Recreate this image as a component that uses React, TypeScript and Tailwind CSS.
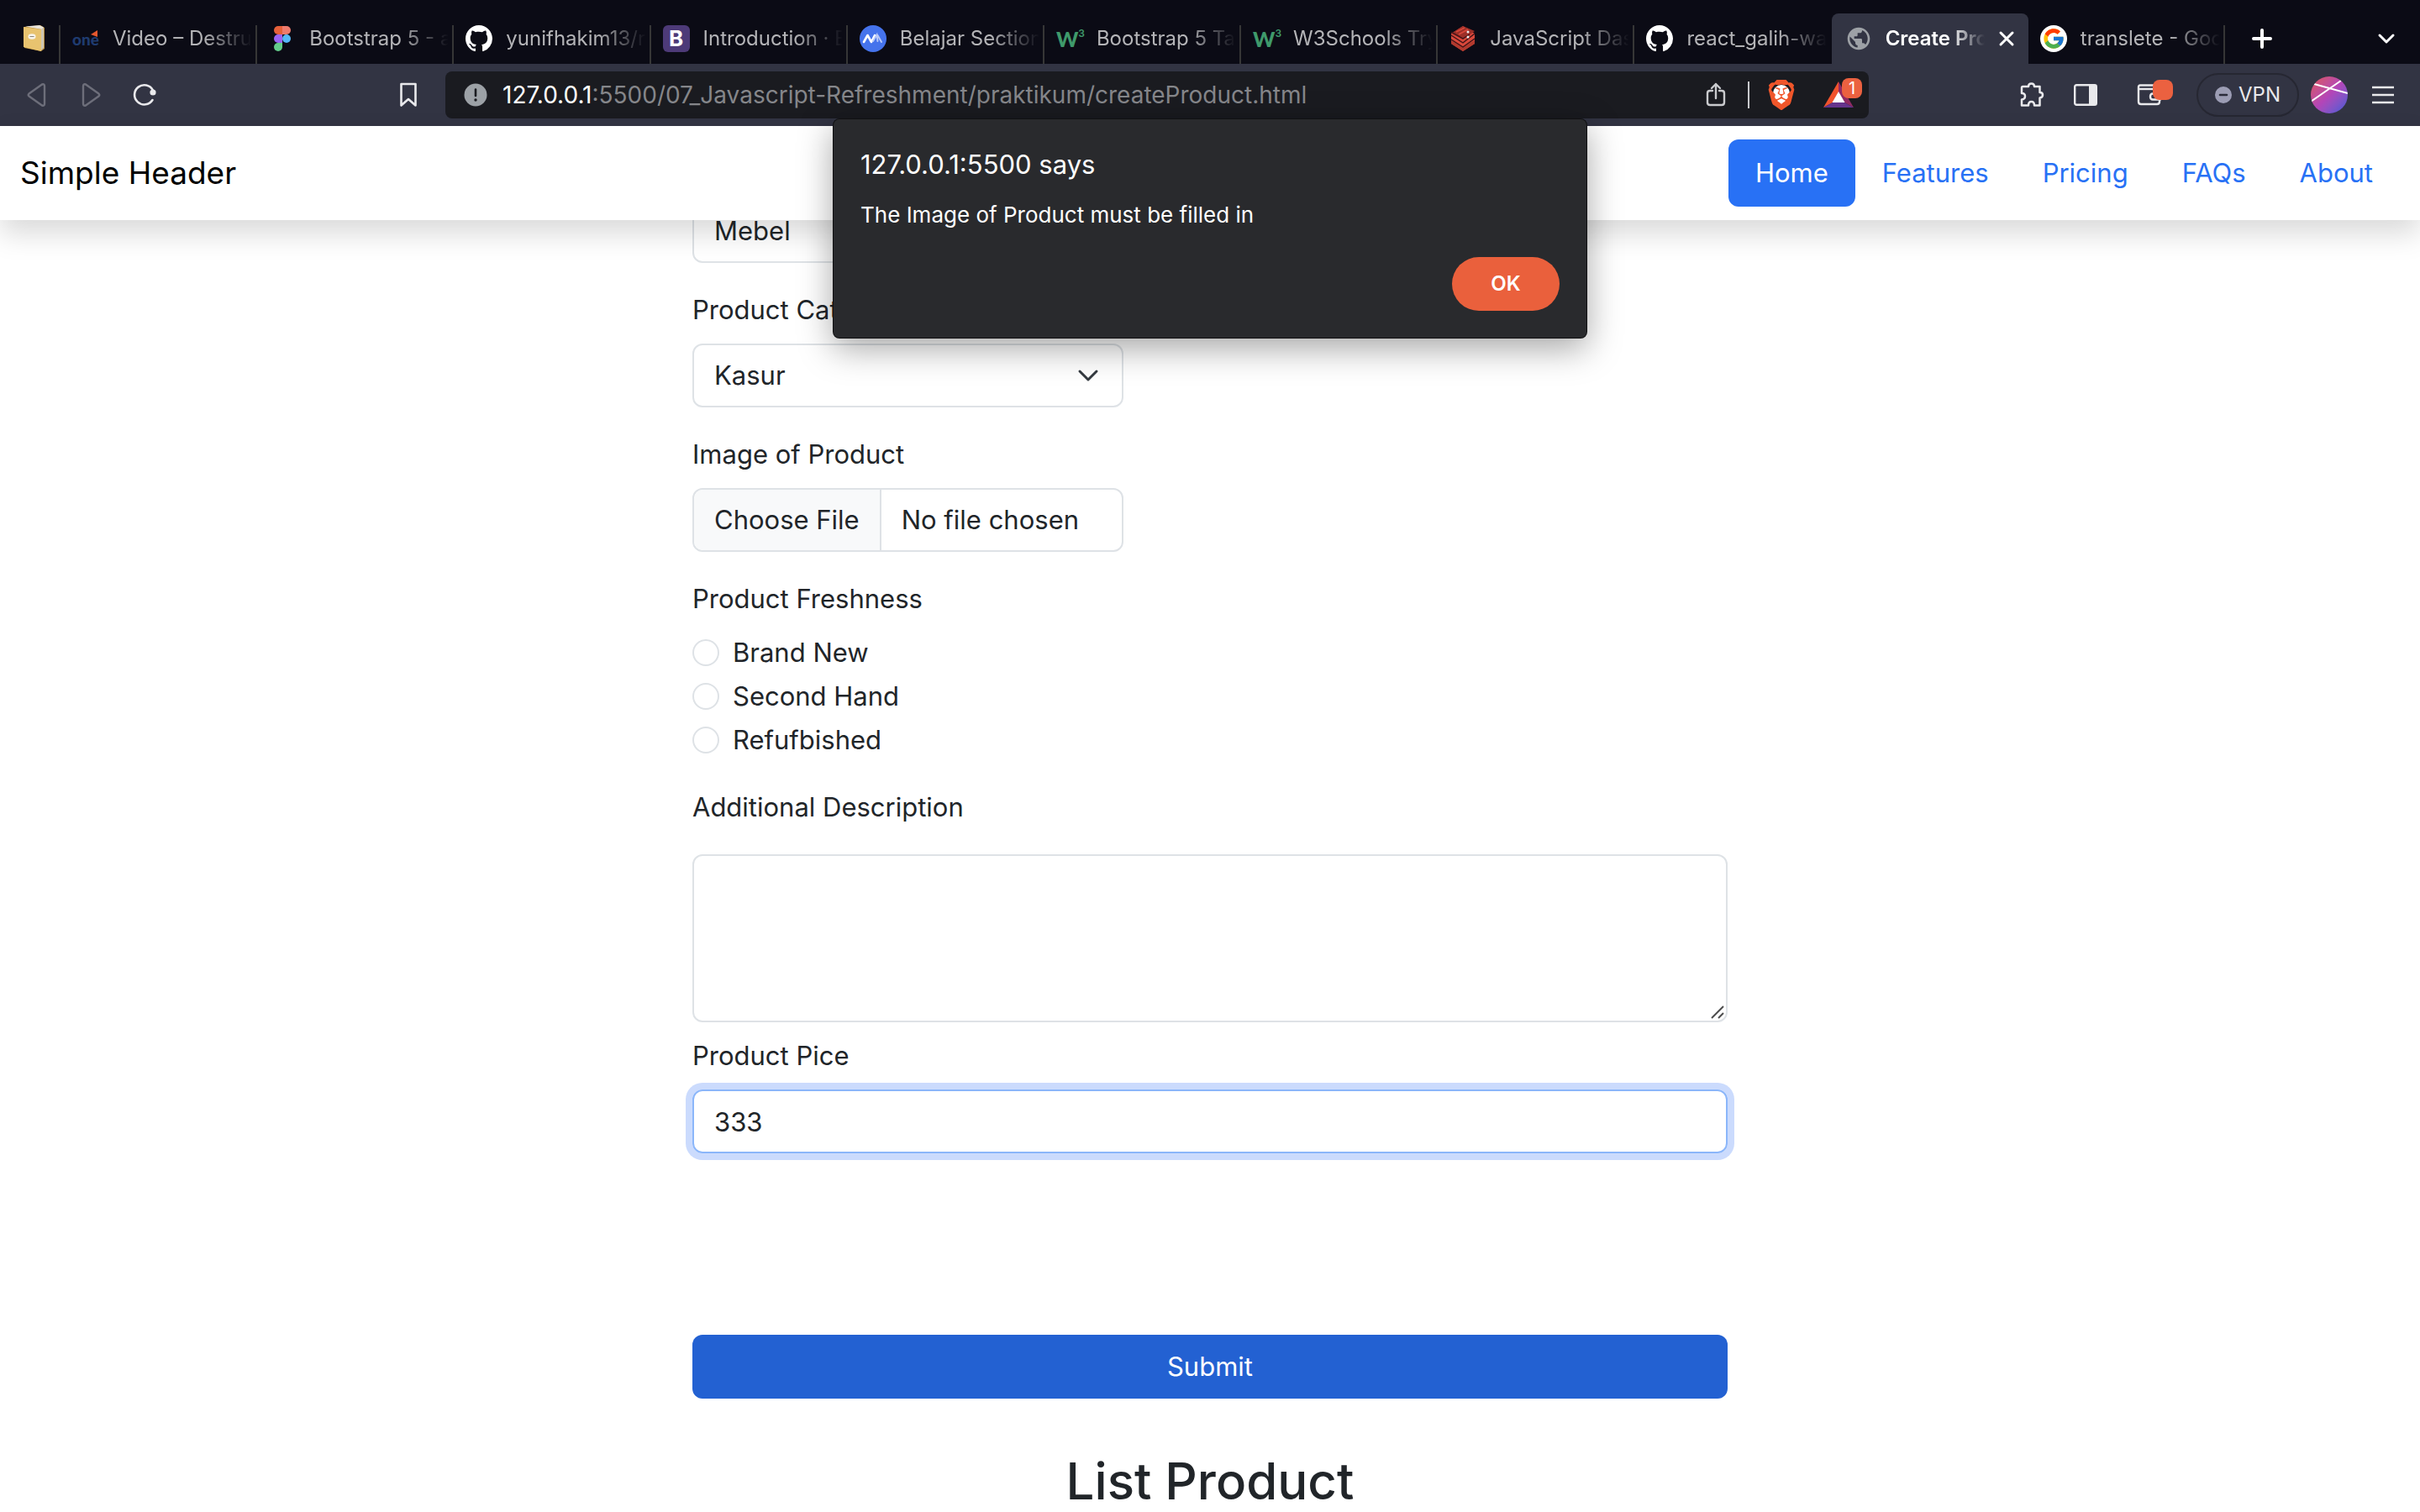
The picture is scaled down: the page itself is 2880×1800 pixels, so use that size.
import type { ReactNode } from 'react';
import { FcGoogle } from 'react-icons/fc';
import { VscGithubInverted } from 'react-icons/vsc';
import { MdPublic } from 'react-icons/md';
import { SiBrave } from 'react-icons/si';

function BookIcon() {
  return (
    <svg className="h-8 w-7" viewBox="0 0 28 32" aria-hidden="true">
      <path d="M3 2 L22 0 L27 3 L27 28 L23 31 L3 27 Z" fill="#b98f3e" />
      <path d="M4 1.500 L21 0 L26 2.500 L24 5 Z" fill="#e9e4da" />
      <path d="M26 3 L26 27 L23 30 L23 5 Z" fill="#cfc6b4" />
      <path d="M2 2 L23 5 L23 31 L2 26 Z" fill="#e8c36f" />
      <ellipse cx="12" cy="13.500" rx="4.500" ry="3.200" fill="#f7f4ec" />
      <path d="M9.500 13.500 H14.500" stroke="#8c8577" strokeWidth="1" />
    </svg>
  );
}

function OneIcon() {
  return (
    <span className="relative flex h-8 w-8 items-center justify-center font-['Lato'] text-[19px] leading-none font-black text-[#1f3b70]">
      one
      <svg className="absolute top-1.5 right-0.5 size-2" viewBox="0 0 8 8" aria-hidden="true">
        <path d="M8 0 V8 L0 5 Z" fill="#e4572e" />
      </svg>
    </span>
  );
}

function FigmaIcon() {
  return (
    <svg className="h-8 w-8" viewBox="0 0 32 32" aria-hidden="true">
      <path d="M16 1 H11 a5 5 0 0 0 0 10 H16 Z" fill="#e5603a" />
      <path d="M16 1 H21 a5 5 0 0 1 0 10 H16 Z" fill="#ee7b6d" />
      <path d="M16 11 H11 a5 5 0 0 0 0 10 H16 Z" fill="#9a63f3" />
      <circle cx="21" cy="16" r="5" fill="#55b8f8" />
      <path d="M16 21 H11 a5 5 0 1 0 5 5 Z" fill="#63cc8a" />
    </svg>
  );
}

function BootstrapIcon() {
  return (
    <span className="flex size-8 items-center justify-center rounded-md bg-[#4d3a78] font-['Inter'] text-[26px] leading-none font-bold text-white">
      B
    </span>
  );
}

function BelajarIcon() {
  return (
    <svg className="size-8" viewBox="0 0 32 32" aria-hidden="true">
      <circle cx="16" cy="16" r="16" fill="#4573ec" />
      <path d="M5 20 L9.500 12 L14 20 L18 12" fill="none" stroke="#fff" strokeWidth="2.600" strokeLinecap="round" strokeLinejoin="round" />
      <path d="M16 19 L20.500 11.500 L21.500 19 M21.500 12 L26 20" fill="none" stroke="#b9c9f8" strokeWidth="2" strokeLinecap="round" />
    </svg>
  );
}

function W3Icon() {
  return (
    <span className="flex h-8 w-8 items-center leading-none font-black text-[#3f9a6b]">
      <span className="font-['Lato'] text-[25px]">W</span>
      <span className="self-start pt-1 font-['Inter'] text-[12px] font-semibold">3</span>
    </span>
  );
}

function DashIcon() {
  return (
    <svg className="size-8" viewBox="0 0 32 32" aria-hidden="true">
      <path d="M2 10 L16 1 L30 10 V22 L16 31 L2 22 Z" fill="#d9483b" />
      <path d="M2 18 L16 26 L30 18 V22 L16 31 L2 22 Z" fill="#b23a2e" />
      <path d="M2 10 L16 1 L30 7 L16 17 Z" fill="#9c2f28" />
      <path d="M2 12 L16 21 L30 10 M2 17 L16 26 L30 16 M2 8 L16 16 L24 11" fill="none" stroke="#3a1216" strokeWidth="1.400" />
      <path d="M8 8 L18 3 M11 11 L22 5" stroke="#d9483b" strokeWidth="1.600" />
      <circle cx="22" cy="8" r="1.500" fill="#eee" />
      <circle cx="22" cy="14" r="1.500" fill="#eee" />
    </svg>
  );
}

function GithubIcon() {
  return <VscGithubInverted className="size-8 text-white" />;
}

function GoogleIcon() {
  return (
    <span className="flex size-8 items-center justify-center rounded-full bg-white">
      <FcGoogle className="size-7" />
    </span>
  );
}

type Tab = { title: string; icon: ReactNode; active?: boolean; noLine?: boolean };

const tabs: Tab[] = [
  { title: 'Video – Destru', icon: <OneIcon /> },
  { title: 'Bootstrap 5 - a', icon: <FigmaIcon /> },
  { title: 'yunifhakim13/r', icon: <GithubIcon /> },
  { title: 'Introduction · B', icon: <BootstrapIcon /> },
  { title: 'Belajar Section', icon: <BelajarIcon /> },
  { title: 'Bootstrap 5 Ta', icon: <W3Icon /> },
  { title: 'W3Schools Try', icon: <W3Icon /> },
  { title: 'JavaScript Das', icon: <DashIcon /> },
  { title: 'react_galih-wa', icon: <GithubIcon />, noLine: true },
  { title: 'Create Pro', icon: <MdPublic className="size-8 text-[#9da1a6]" />, active: true },
  { title: 'translete - Goo', icon: <GoogleIcon /> },
];

function TabItem({ title, icon, active, noLine }: Tab) {
  if (active) {
    return (
      <div className="mt-4 flex min-w-0 items-center gap-4 rounded-t-lg bg-[#323443] px-4">
        <span className="shrink-0">{icon}</span>
        <span className="min-w-0 flex-1 overflow-hidden mask-r-from-65% text-[24px] leading-8 font-semibold whitespace-nowrap text-white">
          {title}
        </span>
        <button type="button" aria-label="Close tab" className="shrink-0 text-white">
          <svg className="size-5" viewBox="0 0 20 20" fill="none" stroke="currentColor" strokeWidth="3" strokeLinecap="round" aria-hidden="true">
            <path d="M3 3 L17 17 M17 3 L3 17" />
          </svg>
        </button>
      </div>
    );
  }
  return (
    <div className={`mt-[30px] flex min-w-0 items-start gap-4 border-r-2 pr-1 pl-3.5 ${noLine ? 'border-transparent' : 'border-[#363636]'}`}>
      <span className="shrink-0">{icon}</span>
      <span className="min-w-0 flex-1 overflow-hidden mask-r-from-65% text-[24px] leading-8 whitespace-nowrap text-[#b4b4b7]">
        {title}
      </span>
    </div>
  );
}

function TabStrip() {
  return (
    <div className="flex h-[76px] bg-[#0b0b15]">
      <div className="mt-[30px] flex w-[72px] shrink-0 items-start justify-end border-r-2 border-[#363636] pr-4">
        <BookIcon />
      </div>
      <div className="grid min-w-0 flex-1 grid-cols-11">
        {tabs.map((tab) => (
          <TabItem key={tab.title} {...tab} />
        ))}
      </div>
      <div className="flex w-[232px] shrink-0 items-center justify-between pt-4 pr-7 pl-7 text-white">
        <button type="button" aria-label="New tab">
          <svg className="size-8" viewBox="0 0 32 32" fill="none" stroke="currentColor" strokeWidth="4" strokeLinecap="round" aria-hidden="true">
            <path d="M16 6 V26 M6 16 H26" />
          </svg>
        </button>
        <button type="button" aria-label="Search tabs">
          <svg className="size-6" viewBox="0 0 24 24" fill="none" stroke="currentColor" strokeWidth="3" strokeLinecap="round" strokeLinejoin="round" aria-hidden="true">
            <path d="M4 8 L12 16 L20 8" />
          </svg>
        </button>
      </div>
    </div>
  );
}

function Toolbar() {
  return (
    <div className="flex h-[74px] items-center bg-[#323443] pr-[30px] text-[#e9e9ec]">
      <div className="flex w-[530px] shrink-0 items-center justify-between pr-7 pl-7">
        <div className="flex items-center gap-8">
          <button type="button" aria-label="Back" className="text-[#6d6e7a]">
            <svg className="size-8" viewBox="0 0 32 32" fill="none" stroke="currentColor" strokeWidth="2.400" strokeLinejoin="round" aria-hidden="true">
              <path d="M22 3.500 L6.500 14.500 Q5 16 6.500 17.500 L22 28.500 Q25 29.500 25 26.500 V5.500 Q25 2.500 22 3.500 Z" />
            </svg>
          </button>
          <button type="button" aria-label="Forward" className="text-[#6d6e7a]">
            <svg className="size-8" viewBox="0 0 32 32" fill="none" stroke="currentColor" strokeWidth="2.400" strokeLinejoin="round" aria-hidden="true">
              <path d="M10 3.500 L25.500 14.500 Q27 16 25.500 17.500 L10 28.500 Q7 29.500 7 26.500 V5.500 Q7 2.500 10 3.500 Z" />
            </svg>
          </button>
          <button type="button" aria-label="Reload">
            <svg className="size-8" viewBox="0 0 32 32" fill="none" stroke="currentColor" strokeWidth="2.600" strokeLinecap="round" aria-hidden="true">
              <path d="M25.500 22 A11.600 11.600 0 1 1 26 10.500" />
              <circle cx="26" cy="13" r="3.600" fill="currentColor" stroke="none" />
            </svg>
          </button>
        </div>
        <button type="button" aria-label="Bookmark this page">
          <svg className="size-8" viewBox="0 0 32 32" fill="none" stroke="currentColor" strokeWidth="2.600" strokeLinejoin="round" aria-hidden="true">
            <path d="M7.500 3 H24.500 V28.500 L16 21 L7.500 28.500 Z" />
          </svg>
        </button>
      </div>

      <div className="flex h-14 min-w-0 flex-1 items-center rounded-lg bg-[#1a1b20] pr-2 pl-[22px]">
        <svg className="mr-[18px] size-7 shrink-0" viewBox="0 0 28 28" aria-hidden="true">
          <circle cx="14" cy="14" r="13.500" fill="#9ca1a6" />
          <path d="M14 7.500 V15" stroke="#1a1b20" strokeWidth="2.600" strokeLinecap="round" />
          <circle cx="14" cy="20" r="1.700" fill="#1a1b20" />
        </svg>
        <div className="min-w-0 flex-1 truncate text-[28px] leading-9 text-[#85868a]">
          <span className="text-white">127.0.0.1</span>:5500/07_Javascript-Refreshment/praktikum/createProduct.html
        </div>
        <button type="button" aria-label="Share this page" className="text-[#c9cacd]">
          <svg className="size-8" viewBox="0 0 32 32" fill="none" stroke="currentColor" strokeWidth="2.400" strokeLinecap="round" strokeLinejoin="round" aria-hidden="true">
            <path d="M12 11 H9 Q6 11 6 14 V25 Q6 28 9 28 H23 Q26 28 26 25 V14 Q26 11 23 11 H20" />
            <path d="M16 20 V3 M11 8 L16 3 L21 8" />
          </svg>
        </button>
        <span className="mr-[22px] ml-[22px] h-8 w-0.5 bg-[#c9cacd]" />
        <button type="button" aria-label="Brave Shields" className="relative flex h-9 w-8 items-center justify-center text-[#f0562a]">
          <span className="absolute h-6 w-5 rounded-full bg-white" />
          <SiBrave className="relative size-9 shrink-0" />
        </button>
        <button type="button" aria-label="Brave Rewards" className="relative ml-[34px] flex h-9 w-[46px] items-center">
          <svg className="h-8 w-9" viewBox="0 0 36 32" aria-hidden="true">
            <path d="M18 0 L0 31 L11 25 L18 13 Z" fill="#f1532d" />
            <path d="M18 0 L36 31 L25 25 L18 13 Z" fill="#912a63" />
            <path d="M0 31 L11 25 H25 L36 31 Z" fill="#66348c" />
            <path d="M18 12 L25.500 25 H10.500 Z" fill="#fff" />
          </svg>
          <span className="absolute -top-0.5 right-0 flex size-6 items-center justify-center rounded-lg bg-[#eb6140] text-[20px] leading-6 text-white">1</span>
        </button>
      </div>

      <div className="flex w-[626px] shrink-0 items-center justify-end">
        <button type="button" aria-label="Extensions" className="mr-8">
          <svg className="size-8" viewBox="0 0 32 32" fill="none" stroke="currentColor" strokeWidth="2.500" strokeLinejoin="round" aria-hidden="true">
            <path d="M5.500 6 H12 Q12 2.500 15.500 2.500 T19 6 H25.500 V13 Q29 13 29 16 T25.500 19.500 V28.500 H19 Q19 24 15.500 24 T12 28.500 H4 V21.500 Q8 21 8 17.500 T4 14 V7.500 Q4 6 5.500 6 Z" />
          </svg>
        </button>
        <button type="button" aria-label="Show sidebar" className="mr-11">
          <svg className="size-8" viewBox="0 0 32 32" aria-hidden="true">
            <rect x="3.200" y="4.200" width="25.600" height="23.600" rx="2" fill="none" stroke="currentColor" strokeWidth="2.400" />
            <rect x="20" y="4" width="9" height="24" fill="currentColor" />
          </svg>
        </button>
        <button type="button" aria-label="Wallet" className="relative mr-7 flex h-8 w-11">
          <svg className="size-8" viewBox="0 0 32 32" fill="none" stroke="currentColor" strokeWidth="2.400" strokeLinejoin="round" aria-hidden="true">
            <path d="M28 17 V8 Q28 4.500 25 4.500 H5 Q3 4.500 3 6.500 V24 Q3 27 6 27 H25 Q28 27 28 24 V22" />
            <path d="M3 9 H27" />
            <path d="M29 14.500 H20 Q17 14.500 17 18 T20 21.500 H29 Z" />
          </svg>
          <span className="absolute -top-0.5 right-0 size-6 rounded-lg bg-[#eb6140]" />
        </button>
        <button type="button" className="mr-3.5 flex h-13 items-center gap-2 rounded-full border-2 border-[#262732] px-5">
          <svg className="size-5" viewBox="0 0 20 20" aria-hidden="true">
            <circle cx="10" cy="10" r="10" fill="#9c9db4" />
            <path d="M6 10 H14" stroke="#2b2c3a" strokeWidth="2.600" strokeLinecap="round" />
          </svg>
          <span className="text-[24px] leading-8">VPN</span>
        </button>
        <button type="button" aria-label="Profile" className="mr-7 size-11 overflow-hidden rounded-full bg-linear-to-br from-[#e0524f] via-[#b345b8] to-[#3557d8]">
          <svg className="size-11" viewBox="0 0 44 44" fill="none" stroke="#fff" strokeWidth="2" aria-hidden="true">
            <path d="M4 9 L44 20 M0 30 L36 5" />
          </svg>
        </button>
        <button type="button" aria-label="Menu">
          <svg className="size-7" viewBox="0 0 28 28" stroke="currentColor" strokeWidth="2.500" aria-hidden="true">
            <path d="M1 5 H27 M1 14 H27 M1 23 H27" />
          </svg>
        </button>
      </div>
    </div>
  );
}

const links = ['Features', 'Pricing', 'FAQs', 'About'];

function SiteHeader() {
  return (
    <header className="relative z-10 flex items-center justify-between bg-white px-6 py-4 shadow-[0_16px_32px_rgba(0,0,0,0.15)]">
      <a href="#top" className="text-[37px] leading-12 text-black">
        Simple Header
      </a>
      <nav className="flex text-[31px] leading-12">
        <a href="#home" className="rounded-xl bg-[#2871f5] px-8 py-4 text-white">
          Home
        </a>
        {links.map((link) => (
          <a key={link} href={`#${link.toLowerCase()}`} className="px-8 py-4 text-[#2871f5]">
            {link}
          </a>
        ))}
      </nav>
    </header>
  );
}

function SelectBox({ id, value, label }: { id: string; value: string; label?: string }) {
  return (
    <div className="relative w-[513px]">
      <select
        id={id}
        aria-label={label}
        defaultValue={value}
        className="h-[76px] w-full appearance-none rounded-xl border-2 border-[#dee2e6] bg-white pr-16 pl-6 outline-none"
      >
        <option>{value}</option>
      </select>
      <svg
        className="pointer-events-none absolute top-6 right-7 size-7"
        viewBox="0 0 28 28"
        fill="none"
        stroke="#343a40"
        strokeWidth="3"
        strokeLinecap="round"
        strokeLinejoin="round"
        aria-hidden="true"
      >
        <path d="M4 9 L14 19 L24 9" />
      </svg>
    </div>
  );
}

const conditions = ['Brand New', 'Second Hand', 'Refufbished'];

function ProductForm() {
  return (
    <form className="mx-auto -mt-[25px] w-[1232px] max-w-full text-[31px] leading-12 text-[#212529]">
      <SelectBox id="type" value="Mebel" label="Product Type" />

      <label htmlFor="category" className="mt-8 mb-4 block">
        Product Category
      </label>
      <SelectBox id="category" value="Kasur" />

      <label htmlFor="image" className="mt-8 mb-4 block">
        Image of Product
      </label>
      <input
        id="image"
        type="file"
        className="block h-[76px] w-[513px] rounded-xl border-2 border-[#dee2e6] file:mr-6 file:h-[72px] file:rounded-l-[10px] file:border-r-2 file:border-[#dee2e6] file:bg-[#f8f9fa] file:px-6 file:text-[#212529]"
      />

      <fieldset className="mt-8">
        <legend className="mb-4">Product Freshness</legend>
        <div className="flex flex-col gap-1">
          {conditions.map((condition) => (
            <label key={condition} className="flex items-center gap-4">
              <input
                type="radio"
                name="freshness"
                className="size-8 appearance-none rounded-full border-2 border-[#dee2e6] bg-white checked:border-8 checked:border-[#2871f5]"
              />
              {condition}
            </label>
          ))}
        </div>
      </fieldset>

      <label htmlFor="description" className="my-8 block">
        Additional Description
      </label>
      <div className="relative">
        <textarea
          id="description"
          className="block h-[200px] w-full resize-none rounded-xl border-2 border-[#dee2e6] px-6 py-3"
        />
        <svg
          className="pointer-events-none absolute right-1 bottom-1 size-4"
          viewBox="0 0 16 16"
          stroke="#4d4d4d"
          strokeWidth="2"
          aria-hidden="true"
        >
          <path d="M1 15 L15 1 M9 15 L15 9" />
        </svg>
      </div>

      <label htmlFor="price" className="my-4 block">
        Product Pice
      </label>
      <input
        id="price"
        type="text"
        defaultValue="333"
        className="block h-[76px] w-full rounded-xl border-2 border-[#8bb6fa] px-6 ring-8 ring-[#cbdbfd] outline-none"
      />

      <button type="submit" className="mt-54 block h-[76px] w-full rounded-xl bg-[#2361d2] text-center text-white">
        Submit
      </button>
    </form>
  );
}

function AlertDialog() {
  return (
    <div
      role="alertdialog"
      aria-labelledby="alert-title"
      aria-describedby="alert-message"
      className="absolute top-[141px] left-1/2 z-20 w-[898px] -translate-x-1/2 rounded-lg border border-black/60 bg-[#292a2d] p-8 shadow-[0_12px_40px_rgba(0,0,0,0.35)]"
    >
      <h2 id="alert-title" className="text-[31px] leading-11 text-white">
        127.0.0.1:5500 says
      </h2>
      <p id="alert-message" className="mt-4 text-[26px] leading-11 text-white">
        The Image of Product must be filled in
      </p>
      <div className="mt-7 flex justify-end">
        <button type="button" className="h-16 w-32 rounded-full bg-[#ea603c] text-[24px] font-semibold text-white">
          OK
        </button>
      </div>
    </div>
  );
}

export default function App() {
  return (
    <div className="relative flex h-screen flex-col overflow-hidden bg-white font-['Inter','Liberation_Sans',sans-serif]">
      <TabStrip />
      <Toolbar />
      <SiteHeader />
      <main className="min-h-0 flex-1 overflow-hidden">
        <ProductForm />
        <h1 className="mt-15 text-center text-[60px] leading-[76px] font-medium text-[#212529]">List Product</h1>
      </main>
      <AlertDialog />
    </div>
  );
}
